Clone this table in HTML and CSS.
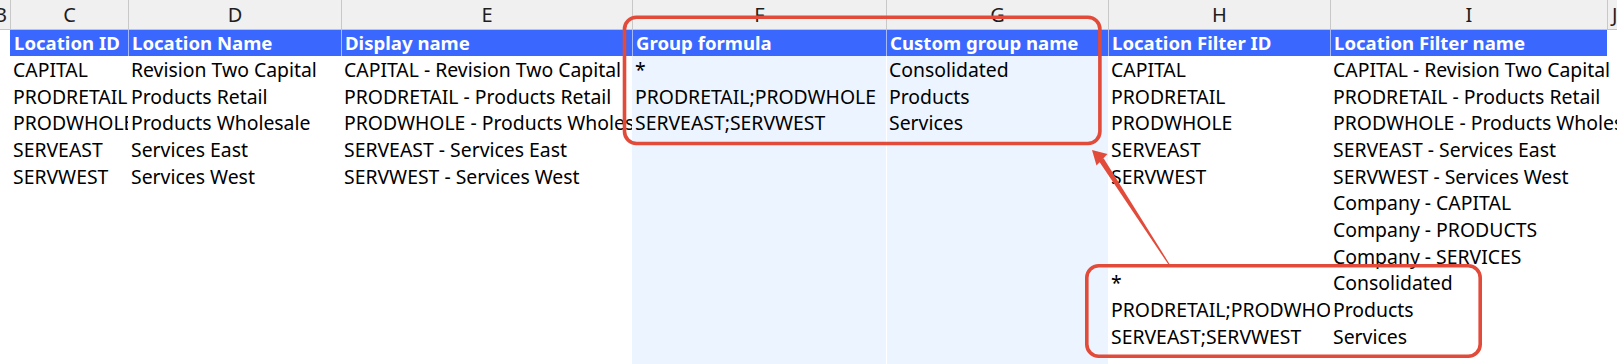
FILE: index.html
```
<!DOCTYPE html>
<html lang="en">
<head>
<meta charset="utf-8">
<title>Location groups</title>
<link rel="stylesheet" href="styles.css">
</head>
<body>
<div class="sheet">
  <div class="row colhead">
    <div class="ch ch-b">B</div>
    <div class="ch">C</div>
    <div class="ch">D</div>
    <div class="ch">E</div>
    <div class="ch">F</div>
    <div class="ch">G</div>
    <div class="ch">H</div>
    <div class="ch">I</div>
    <div class="ch ch-j">J</div>
  </div>
  <div class="row thead">
    <div class="th-empty"></div>
    <div class="th first">Location ID</div>
    <div class="th">Location Name</div>
    <div class="th">Display name</div>
    <div class="th">Group formula</div>
    <div class="th">Custom group name</div>
    <div class="th">Location Filter ID</div>
    <div class="th">Location Filter name</div>
    <div class="th-empty"></div>
  </div>

  <div class="row r">
    <div class="c"></div><div class="c">CAPITAL</div><div class="c">Revision Two Capital</div><div class="c">CAPITAL - Revision Two Capital</div>
    <div class="c f">*</div><div class="c g">Consolidated</div>
    <div class="c">CAPITAL</div><div class="c over">CAPITAL - Revision Two Capital</div><div class="c"></div>
  </div>
  <div class="row r">
    <div class="c"></div><div class="c">PRODRETAIL</div><div class="c">Products Retail</div><div class="c">PRODRETAIL - Products Retail</div>
    <div class="c f">PRODRETAIL;PRODWHOLE</div><div class="c g">Products</div>
    <div class="c">PRODRETAIL</div><div class="c over">PRODRETAIL - Products Retail</div><div class="c"></div>
  </div>
  <div class="row r">
    <div class="c"></div><div class="c">PRODWHOLE</div><div class="c">Products Wholesale</div><div class="c">PRODWHOLE - Products Wholesale</div>
    <div class="c f">SERVEAST;SERVWEST</div><div class="c g">Services</div>
    <div class="c">PRODWHOLE</div><div class="c over">PRODWHOLE - Products Wholesale</div><div class="c"></div>
  </div>
  <div class="row r">
    <div class="c"></div><div class="c">SERVEAST</div><div class="c">Services East</div><div class="c">SERVEAST - Services East</div>
    <div class="c f"></div><div class="c g"></div>
    <div class="c">SERVEAST</div><div class="c over">SERVEAST - Services East</div><div class="c"></div>
  </div>
  <div class="row r">
    <div class="c"></div><div class="c">SERVWEST</div><div class="c">Services West</div><div class="c">SERVWEST - Services West</div>
    <div class="c f"></div><div class="c g"></div>
    <div class="c">SERVWEST</div><div class="c over">SERVWEST - Services West</div><div class="c"></div>
  </div>
  <div class="row r">
    <div class="c"></div><div class="c"></div><div class="c"></div><div class="c"></div>
    <div class="c f"></div><div class="c g"></div>
    <div class="c"></div><div class="c over">Company - CAPITAL</div><div class="c"></div>
  </div>
  <div class="row r">
    <div class="c"></div><div class="c"></div><div class="c"></div><div class="c"></div>
    <div class="c f"></div><div class="c g"></div>
    <div class="c"></div><div class="c over">Company - PRODUCTS</div><div class="c"></div>
  </div>
  <div class="row r">
    <div class="c"></div><div class="c"></div><div class="c"></div><div class="c"></div>
    <div class="c f"></div><div class="c g"></div>
    <div class="c"></div><div class="c over">Company - SERVICES</div><div class="c"></div>
  </div>
  <div class="row r">
    <div class="c"></div><div class="c"></div><div class="c"></div><div class="c"></div>
    <div class="c f"></div><div class="c g"></div>
    <div class="c">*</div><div class="c over">Consolidated</div><div class="c"></div>
  </div>
  <div class="row r">
    <div class="c"></div><div class="c"></div><div class="c"></div><div class="c"></div>
    <div class="c f"></div><div class="c g"></div>
    <div class="c">PRODRETAIL;PRODWHOLE</div><div class="c over">Products</div><div class="c"></div>
  </div>
  <div class="row r">
    <div class="c"></div><div class="c"></div><div class="c"></div><div class="c"></div>
    <div class="c f"></div><div class="c g"></div>
    <div class="c">SERVEAST;SERVWEST</div><div class="c over">Services</div><div class="c"></div>
  </div>
  <div class="row r">
    <div class="c"></div><div class="c"></div><div class="c"></div><div class="c"></div>
    <div class="c f"></div><div class="c g"></div>
    <div class="c"></div><div class="c"></div><div class="c"></div>
  </div>

  <svg class="annot" width="1617" height="364" viewBox="0 0 1617 364" aria-hidden="true">
    <rect x="624.5" y="17.2" width="475.4" height="126.3" rx="12" ry="12" fill="none" stroke="#E24B3A" stroke-width="3.6"/>
    <rect x="1086.8" y="265.8" width="393.4" height="90.4" rx="12" ry="12" fill="none" stroke="#E24B3A" stroke-width="3.6"/>
    <polygon points="1092,150 1107.5,154 1096.5,165.5" fill="#E24B3A"/>
    <polygon points="1103.6,158.2 1099,161.3 1169.6,266.3 1170.6,265.7" fill="#E24B3A"/>
  </svg>
</div>
</body>
</html>
```
FILE: styles.css
```
html, body {
  margin: 0;
  padding: 0;
  background: #ffffff;
}

body {
  width: 1617px;
  height: 364px;
  overflow: hidden;
  font-family: "Noto Sans", "Liberation Sans", sans-serif;
  color: #000;
}

.sheet {
  position: relative;
  width: 1617px;
}

.row {
  display: grid;
  grid-template-columns: 10px 118px 213px 291px 254px 222px 222px 277px 10px;
}

/* column letters */
.colhead {
  height: 29px;
  background: #f0f0f0;
  border-bottom: 1px solid #c4c4c4;
}

.ch {
  box-sizing: border-box;
  border-left: 1px solid #c8c8c8;
  text-align: center;
  font-size: 20px;
  line-height: 29px;
  color: #1e1e1e;
  overflow: hidden;
  white-space: nowrap;
}

.ch-b {
  border-left: none;
  text-align: right;
  padding-right: 3px;
  direction: rtl;
}

.ch-j {
  text-align: left;
  padding-left: 4px;
}

/* table header */
.thead {
  height: 26px;
}

.th {
  box-sizing: border-box;
  background: #3a68ff;
  color: #ffffff;
  font-weight: 700;
  font-size: 18.6px;
  line-height: 26px;
  padding-left: 3px;
  border-left: 1px solid rgba(255, 255, 255, 0.55);
  white-space: nowrap;
  overflow: hidden;
}

.th.first {
  border-left: none;
  padding-left: 4px;
}

.th-empty {
  background: #ffffff;
}

/* data rows */
.r {
  height: 26.667px;
}

.c {
  box-sizing: border-box;
  font-size: 19.4px;
  line-height: 26.667px;
  padding-left: 3px;
  padding-top: 1px;
  white-space: nowrap;
  overflow: hidden;
}

.c.over {
  overflow: visible;
}

.c.f,
.c.g {
  background: #ebf4ff;
  border-bottom: 1px solid #ffffff;
}

.c.g {
  border-left: 1px solid #ffffff;
  padding-left: 2px;
}

.annot {
  position: absolute;
  left: 0;
  top: 0;
  pointer-events: none;
}
```
